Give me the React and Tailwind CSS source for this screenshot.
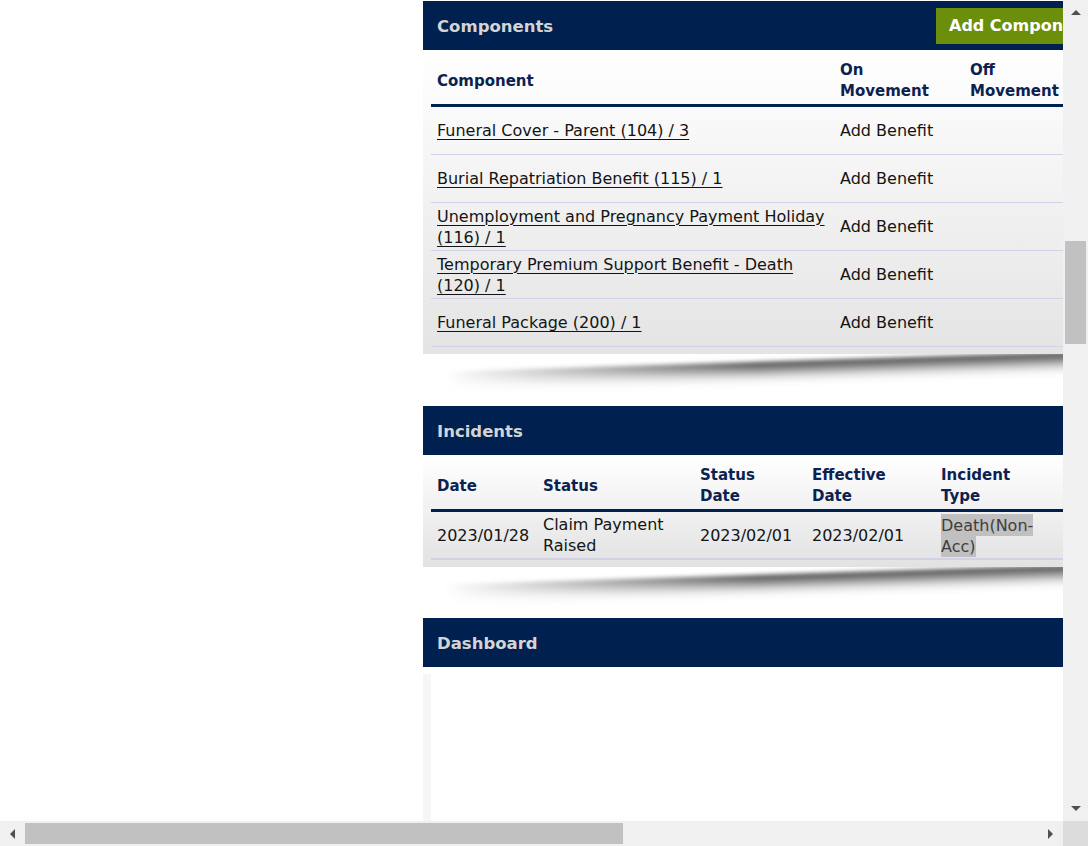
import React from 'react';

const components = [
  { name: 'Funeral Cover - Parent (104) / 3', on: 'Add Benefit' },
  { name: 'Burial Repatriation Benefit (115) / 1', on: 'Add Benefit' },
  { name: 'Unemployment and Pregnancy Payment Holiday (116) / 1', on: 'Add Benefit' },
  { name: 'Temporary Premium Support Benefit - Death (120) / 1', on: 'Add Benefit' },
  { name: 'Funeral Package (200) / 1', on: 'Add Benefit' },
];

function PanelHeader({ title, children }) {
  return (
    <div className="h-[49px] bg-[#00214f] flex items-center pl-[14px] pr-[8px] shrink-0">
      <h2 className="flex-1 pt-[3px] text-[16.5px] font-bold text-[#d4d4d4]">{title}</h2>
      {children}
    </div>
  );
}

function Shadow({ height }) {
  return (
    <div className={`relative overflow-hidden shrink-0 ${height} [mask-image:linear-gradient(to_right,transparent_3%,black_50%)]`}>
      <div className="absolute left-[20px] right-[-100px] top-[-26px] h-[20px] bg-white origin-top-right -rotate-[1.8deg] blur-[2px] shadow-[0_9px_14px_rgba(0,0,0,0.75)]" />
    </div>
  );
}

function ComponentsPanel() {
  return (
    <section className="flex flex-col">
      <PanelHeader title="Components">
        <button className="w-[151px] h-[36px] shrink-0 bg-[#6b8e0b] text-white font-bold text-[16px] text-left pl-[13px] whitespace-nowrap overflow-hidden">
          Add Component
        </button>
      </PanelHeader>
      <div className="bg-linear-to-b from-white to-[#e4e4e4] px-2 pb-[7px]">
        <div className="grid grid-cols-[403px_130px_1fr] h-[57px] pt-[8px] items-center border-b-[3px] border-[#00214f] text-[15px] font-bold text-[#0b2251] leading-[21px]">
          <div className="px-[6px]">Component</div>
          <div className="px-[6px]">On<br />Movement</div>
          <div className="px-[6px]">Off<br />Movement</div>
        </div>
        {components.map((c) => (
          <div key={c.name} className="grid grid-cols-[403px_130px_1fr] h-[48px] items-center border-b border-[#d3d1e6] text-[16px] leading-[21px] text-[#141414]">
            <div className="px-[6px]">
              <a href="#" className="underline decoration-1 underline-offset-[3px]">{c.name}</a>
            </div>
            <div className="px-[6px]">{c.on}</div>
            <div className="px-[6px]" />
          </div>
        ))}
      </div>
    </section>
  );
}

function IncidentsPanel() {
  const cols = 'grid grid-cols-[106px_157px_112px_129px_115px_1fr]';
  return (
    <section className="flex flex-col">
      <PanelHeader title="Incidents" />
      <div className="bg-linear-to-b from-white to-[#e2e2e2] px-2 pb-[7px]">
        <div className={`${cols} h-[57px] pt-[8px] items-center border-b-[3px] border-[#00214f] text-[15px] font-bold text-[#0b2251] leading-[21px]`}>
          <div className="px-[6px]">Date</div>
          <div className="px-[6px]">Status</div>
          <div className="px-[6px]">Status<br />Date</div>
          <div className="px-[6px]">Effective<br />Date</div>
          <div className="px-[6px]">Incident<br />Type</div>
          <div />
        </div>
        <div className={`${cols} h-[48px] items-center border-b-2 border-[#d3d1e6] text-[16px] leading-[21px] text-[#141414]`}>
          <div className="px-[6px]">2023/01/28</div>
          <div className="px-[6px]">Claim Payment Raised</div>
          <div className="px-[6px]">2023/02/01</div>
          <div className="px-[6px]">2023/02/01</div>
          <div className="px-[6px]">
            <span className="bg-[#c0c0c0] text-[#3e3e3e] py-[1.5px]">Death(Non-Acc)</span>
          </div>
          <div />
        </div>
      </div>
    </section>
  );
}

function DashboardPanel() {
  return (
    <section className="flex flex-col">
      <PanelHeader title="Dashboard" />
      <div className="bg-white pt-[7px]">
        <div className="h-[300px] pl-2 bg-linear-to-r from-[#f6f6f6] to-[#fcfcfc]">
          <div className="h-full bg-white" />
        </div>
      </div>
    </section>
  );
}

function VScroll() {
  return (
    <div className="w-[25px] shrink-0 bg-[#f0f0f0] flex flex-col">
      <div className="h-[25px] flex items-center justify-center">
        <div className="w-0 h-0 border-x-[5px] border-x-transparent border-b-[5px] border-b-[#505050]" />
      </div>
      <div className="flex-1">
        <div className="mt-[216px] ml-[2px] w-[21px] h-[103px] bg-[#c1c1c1]" />
      </div>
      <div className="h-[25px] flex items-center justify-center">
        <div className="w-0 h-0 border-x-[5px] border-x-transparent border-t-[5px] border-t-[#505050]" />
      </div>
    </div>
  );
}

function HScroll() {
  return (
    <div className="h-[25px] shrink-0 flex">
      <div className="flex-1 bg-[#f0f0f0] flex">
        <div className="w-[25px] flex items-center justify-center">
          <div className="w-0 h-0 border-y-[5px] border-y-transparent border-r-[5px] border-r-[#505050]" />
        </div>
        <div className="w-[598px] h-[21px] mt-[2px] bg-[#c1c1c1]" />
        <div className="flex-1" />
        <div className="w-[25px] flex items-center justify-center">
          <div className="w-0 h-0 border-y-[5px] border-y-transparent border-l-[5px] border-l-[#505050]" />
        </div>
      </div>
      <div className="w-[25px] bg-[#dcdcdc]" />
    </div>
  );
}

export default function App() {
  return (
    <div className="w-[1088px] h-[846px] flex flex-col overflow-hidden bg-white font-['DejaVu_Sans',sans-serif]">
      <div className="flex flex-1 min-h-0">
        <div className="flex-1 flex overflow-hidden">
          <div className="w-[423px] shrink-0" />
          <div className="w-[672px] shrink-0 pt-px flex flex-col">
            <ComponentsPanel />
            <Shadow height="h-[52px]" />
            <IncidentsPanel />
            <Shadow height="h-[51px]" />
            <DashboardPanel />
          </div>
        </div>
        <VScroll />
      </div>
      <HScroll />
    </div>
  );
}
